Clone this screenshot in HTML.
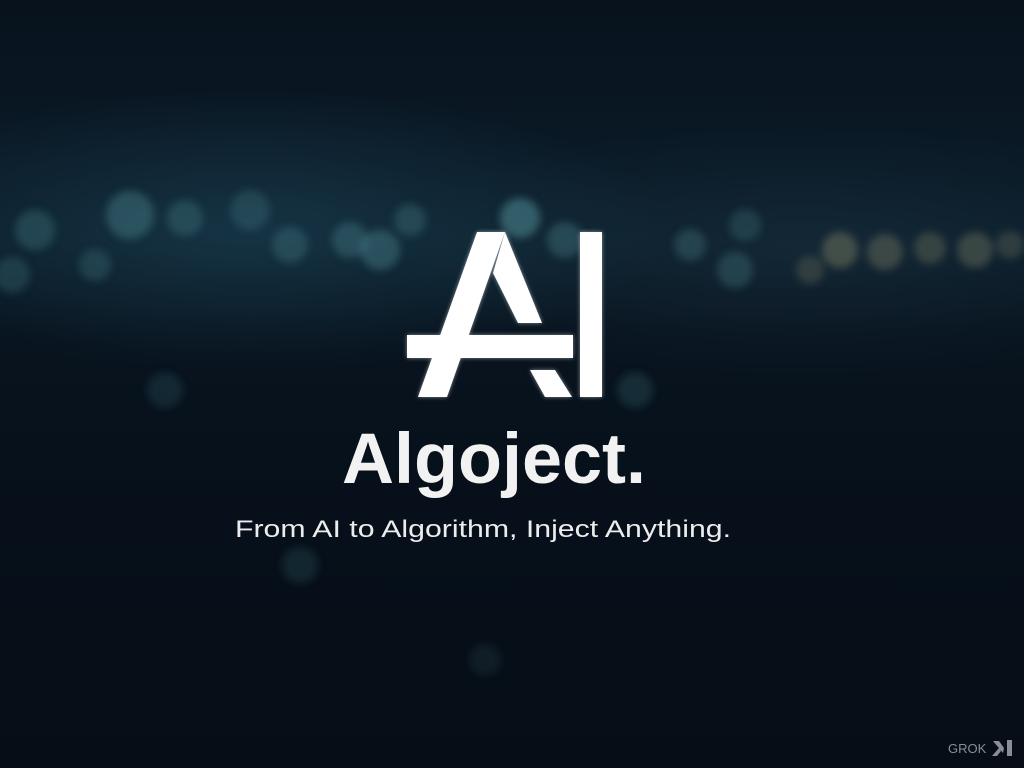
<!DOCTYPE html>
<html><head><meta charset="utf-8"><style>
html,body{margin:0;padding:0;width:1024px;height:768px;overflow:hidden;background:#07111c}
.bg{position:absolute;inset:0;background:
radial-gradient(ellipse 600px 200px at 250px 230px,rgba(35,80,100,.45),transparent 70%),
radial-gradient(ellipse 600px 180px at 800px 250px,rgba(35,60,75,.35),transparent 70%),
linear-gradient(#08121c 0,#0a1926 150px,#0b1d2a 240px,#08141f 330px,#07111b 450px,#060d16 768px)}
</style></head><body>
<div class="bg"></div>
<svg width="1024" height="768" style="position:absolute;left:0;top:0">
<defs><filter id="b" x="-50%" y="-50%" width="200%" height="200%"><feGaussianBlur stdDeviation="4"/></filter>
<filter id="g"><feGaussianBlur stdDeviation="2"/></filter></defs>
<g filter="url(#b)" fill="#4f8a93">
<circle cx="35" cy="230" r="20" opacity=".3"/><circle cx="130" cy="215" r="24" opacity=".4"/>
<circle cx="185" cy="218" r="18" opacity=".3"/><circle cx="250" cy="210" r="20" opacity=".25"/>
<circle cx="290" cy="245" r="18" opacity=".3"/><circle cx="350" cy="240" r="18" opacity=".35"/>
<circle cx="380" cy="250" r="20" opacity=".4"/><circle cx="410" cy="220" r="16" opacity=".3"/>
<circle cx="520" cy="218" r="20" opacity=".55"/><circle cx="565" cy="240" r="18" opacity=".35"/>
<circle cx="690" cy="245" r="16" opacity=".3"/><circle cx="735" cy="270" r="18" opacity=".3"/>
<circle cx="745" cy="225" r="16" opacity=".25"/><circle cx="12" cy="275" r="18" opacity=".25"/>
<circle cx="95" cy="265" r="16" opacity=".25"/><circle cx="165" cy="390" r="18" opacity=".18"/>
<circle cx="635" cy="390" r="18" opacity=".22"/><circle cx="300" cy="565" r="18" opacity=".18"/>
<circle cx="485" cy="660" r="16" opacity=".12"/>
</g>
<g filter="url(#b)" fill="#8a8a6a">
<circle cx="840" cy="250" r="18" opacity=".4"/><circle cx="885" cy="252" r="18" opacity=".35"/>
<circle cx="930" cy="248" r="16" opacity=".3"/><circle cx="975" cy="250" r="18" opacity=".35"/>
<circle cx="1010" cy="245" r="14" opacity=".25"/><circle cx="810" cy="270" r="14" opacity=".25"/>
</g>
<g fill="#fff" filter="url(#g)" opacity=".5">
<polygon points="477,232 505,232 447,397 418,397"/>
<polygon points="505,232 493,273 518,323 542,323"/>
<polygon points="530,370 555,370 572,397 545,397"/>
<rect x="407" y="335" width="166" height="23"/>
<rect x="580" y="232" width="22" height="165"/>
</g>
<g fill="#fff">
<polygon points="477,232 505,232 447,397 418,397"/>
<polygon points="505,232 493,273 518,323 542,323"/>
<polygon points="530,370 555,370 572,397 545,397"/>
<rect x="407" y="335" width="166" height="23"/>
<rect x="580" y="232" width="22" height="165"/>
</g>
<text x="342" y="483" font-family="Liberation Sans, sans-serif" font-weight="bold" font-size="71" fill="#f2f2f2" textLength="304" lengthAdjust="spacingAndGlyphs">Algoject.</text>
<text x="235" y="537" font-family="Liberation Sans, sans-serif" font-size="24" fill="#ececec" textLength="496" lengthAdjust="spacingAndGlyphs">From AI to Algorithm, Inject Anything.</text>
<text x="948" y="753" font-family="Liberation Sans, sans-serif" font-size="13" fill="#8a8e94">GROK</text>
<path d="M993 741 L999 741 L1004 748 L1003 753 Z M992 756 L999 748 L1001 751 L997 756 Z M1007 740 L1012 740 L1012 756 L1007 756 Z" fill="#8a8e94"/>
</svg>
</body></html>
